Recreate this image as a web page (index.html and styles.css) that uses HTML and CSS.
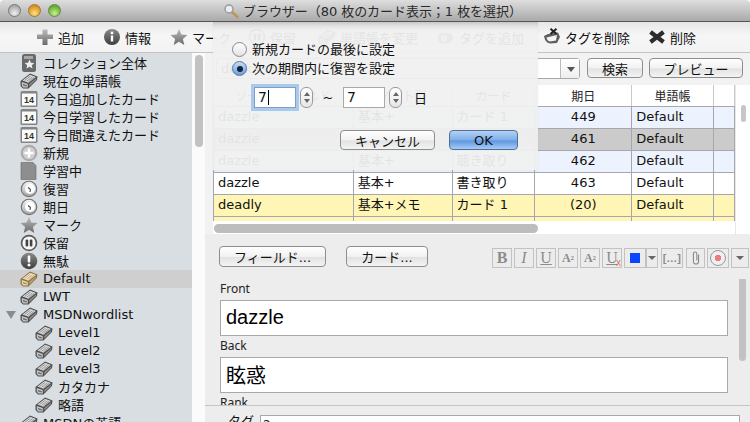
FILE: index.html
```html
<!DOCTYPE html>
<html lang="ja">
<head>
<meta charset="utf-8">
<title>ブラウザー</title>
<link rel="stylesheet" href="styles.css">
</head>
<body>
<svg class="sprite" width="0" height="0">
  <defs>
    <linearGradient id="gDeck" x1="0" y1="0" x2="0" y2="1"><stop offset="0" stop-color="#bbb"/><stop offset="1" stop-color="#6a6a6a"/></linearGradient>
    <linearGradient id="gDisc" x1="0" y1="0" x2="0" y2="1"><stop offset="0" stop-color="#f4f4f4"/><stop offset="1" stop-color="#a5a5a5"/></linearGradient>
    <linearGradient id="gDark" x1="0" y1="0" x2="0" y2="1"><stop offset="0" stop-color="#8a8a8a"/><stop offset="1" stop-color="#3c3c3c"/></linearGradient>
    <symbol id="deck" viewBox="0 0 18 18">
      <path d="M.5 9 L10 1.500 L17.500 4.500 L17 8 L8.500 16.500 L3 16.500 L.5 14Z" fill="#4f4f4f"/>
      <path d="M2.500 8.500 L10 2.800 L15.800 5 L8.500 10.800Z" fill="#dedede"/>
      <path d="M4.500 8.500 L10.500 4 M6.500 9.300 L12.500 4.800 M8.500 9.800 L14 5.400" stroke="#8f8f8f" stroke-width=".9"/>
      <path d="M1.800 10 L7.800 12 V15.500 L3.300 15.500 L1.800 13.800Z" fill="#c4c4c4"/>
      <path d="M3 12 L6.800 13.200 V14.500 L3 13.500Z" fill="#6a6a6a"/>
      <path d="M9.300 12 L16.300 6.300 L16 7.800 L9.300 14.500Z" fill="#909090"/>
    </symbol>
    <symbol id="deckTan" viewBox="0 0 18 18">
      <path d="M.5 9 L10 1.500 L17.500 4.500 L17 8 L8.500 16.500 L3 16.500 L.5 14Z" fill="#8c7448"/>
      <path d="M2.500 8.500 L10 2.800 L15.800 5 L8.500 10.800Z" fill="#f3e6c8"/>
      <path d="M4.500 8.500 L10.500 4 M6.500 9.300 L12.500 4.800 M8.500 9.800 L14 5.400" stroke="#c2a878" stroke-width=".9"/>
      <path d="M1.800 10 L7.800 12 V15.500 L3.300 15.500 L1.800 13.800Z" fill="#e6d4ae"/>
      <path d="M3 12 L6.800 13.200 V14.500 L3 13.500Z" fill="#a68d5e"/>
      <path d="M9.300 12 L16.300 6.300 L16 7.800 L9.300 14.500Z" fill="#bfa672"/>
    </symbol>
    <symbol id="clock" viewBox="0 0 18 18">
      <circle cx="9" cy="9" r="8.300" fill="#6f6f6f"/>
      <circle cx="9" cy="9" r="7.200" fill="url(#gDisc)"/>
      <circle cx="10" cy="9" r="5" fill="#fff"/>
      <path d="M10.500 9.500 L8 7.500 M10.500 9.500 L10 12" stroke="#444" stroke-width="1.100" fill="none"/>
    </symbol>
    <symbol id="star" viewBox="0 0 18 18">
      <path d="M9 1 L11.400 6.500 L17.500 7 L12.900 11 L14.300 17 L9 13.800 L3.700 17 L5.100 11 L.5 7 L6.600 6.500Z" fill="url(#gDeck)"/>
    </symbol>
    <symbol id="pause" viewBox="0 0 18 18">
      <circle cx="9" cy="9" r="8.300" fill="#5a5a5a"/>
      <circle cx="9" cy="9" r="6.600" fill="#f6f6f6"/>
      <rect x="5.600" y="5.500" width="2.600" height="7" rx="1" fill="#444"/>
      <rect x="9.800" y="5.500" width="2.600" height="7" rx="1" fill="#444"/>
    </symbol>
    <symbol id="info" viewBox="0 0 18 18">
      <circle cx="9" cy="9" r="8" fill="url(#gDark)"/>
      <rect x="7.800" y="7.500" width="2.400" height="6" fill="#fff"/>
      <circle cx="9" cy="5" r="1.400" fill="#fff"/>
    </symbol>
    <symbol id="alert" viewBox="0 0 18 18">
      <circle cx="9" cy="9" r="8.300" fill="url(#gDark)"/>
      <rect x="7.700" y="3.500" width="2.600" height="7" rx="1" fill="#fff"/>
      <circle cx="9" cy="13" r="1.500" fill="#fff"/>
    </symbol>
    <symbol id="plus" viewBox="0 0 18 18">
      <circle cx="9" cy="9" r="8.300" fill="#a9a9a9"/>
      <circle cx="9" cy="9" r="6.300" fill="#cfcfcf"/>
      <path d="M9 4.500 V13.500 M4.500 9 H13.500" stroke="#fff" stroke-width="2.400"/>
    </symbol>
    <symbol id="cal" viewBox="0 0 18 18">
      <rect x=".5" y="1" width="17" height="16" rx="1.500" fill="#858585"/>
      <rect x="2" y="3.500" width="14" height="12" fill="#fafafa"/>
      <text x="9" y="13.200" text-anchor="middle" class="cal-num">14</text>
    </symbol>
    <symbol id="page" viewBox="0 0 18 18">
      <path d="M1 .5 H13 L16 3.500 V17.500 H1Z" fill="#8e8e8e" stroke="#666" stroke-width=".6"/>
    </symbol>
    <symbol id="coll" viewBox="0 0 18 18">
      <rect x="2" y="0" width="14" height="18" rx="2.500" fill="#6a6a6a"/>
      <rect x="4" y="2" width="9" height="3" fill="#a8a8a8"/>
      <path d="M9.500 5.500 L10.900 8.700 L14.300 9 L11.800 11.200 L12.500 14.500 L9.500 12.800 L6.500 14.500 L7.200 11.200 L4.700 9 L8.100 8.700Z" fill="#eee"/>
    </symbol>
  </defs>
</svg>

<div class="window">
  <header class="titlebar">
    <div class="lights">
      <span class="light light-gray"></span>
      <span class="light light-orange"></span>
      <span class="light light-green"></span>
    </div>
    <div class="title">
      <svg class="title-icon" viewBox="0 0 16 16" width="16" height="16">
        <circle cx="6" cy="6" r="4" fill="#e8eef2" stroke="#9a9a9a" stroke-width="1.500"/>
        <path d="M9.500 9.500 L14.500 14" stroke="#b79a52" stroke-width="2.600" stroke-linecap="round"/>
      </svg>
      <span>ブラウザー（80 枚のカード表示；1 枚を選択）</span>
    </div>
  </header>

  <div class="content">
    <nav class="toolbar">
      <div class="tool tool-add">
        <svg class="tool-icon" viewBox="0 0 18 18"><path d="M6.500 1.500 H11.500 V6.500 H17 V11 H11.500 V17 H6.500 V11 H1 V6.500 H6.500Z" fill="url(#gDeck)"/></svg>
        <span>追加</span>
      </div>
      <div class="tool tool-info"><svg class="tool-icon"><use href="#info"/></svg><span>情報</span></div>
      <div class="tool tool-mark"><svg class="tool-icon"><use href="#star"/></svg><span>マーク</span></div>
      <div class="tool tool-susp"><svg class="tool-icon"><use href="#pause"/></svg><span>保留</span></div>
      <div class="tool tool-deck"><svg class="tool-icon"><use href="#deck"/></svg><span>単語帳を変更</span></div>
      <div class="tool tool-tagadd">
        <svg class="tool-icon" viewBox="0 0 18 18"><path d="M1 10 Q1 5 5 5 H14 L16.500 10 L13 15.500 H6 Q1 15.500 1 10Z" fill="#777"/><circle cx="7" cy="10.500" r="3.200" fill="#eee"/></svg>
        <span>タグを追加</span>
      </div>
      <div class="tool tool-tagdel">
        <svg class="tool-icon" viewBox="0 0 18 18"><path d="M1 8 L5 6 L15 4.500 L17 9 L14 15 L7 15.500 Q2 15 1 8Z" fill="#5e5e5e"/><path d="M3.500 9.500 L14 7 L13 12.500 L7 13.500 Q4 13 3.500 9.500Z" fill="#f3f3f3"/><path d="M7.500 .8 L13.500 6 M13.500 .8 L7.500 6" stroke="#222" stroke-width="2"/></svg>
        <span>タグを削除</span>
      </div>
      <div class="tool tool-del">
        <svg class="tool-icon" viewBox="0 0 18 18"><path d="M2.500 4 L15.500 14 M15.500 4 L2.500 14" stroke="#2c2c2c" stroke-width="4.200"/></svg>
        <span>削除</span>
      </div>
    </nav>

    <div class="main">
      <aside class="sidebar">
        <ul class="tree">
          <li class="node"><svg class="node-icon"><use href="#coll"/></svg><span>コレクション全体</span></li>
          <li class="node"><svg class="node-icon"><use href="#deck"/></svg><span>現在の単語帳</span></li>
          <li class="node"><svg class="node-icon"><use href="#cal"/></svg><span>今日追加したカード</span></li>
          <li class="node"><svg class="node-icon"><use href="#cal"/></svg><span>今日学習したカード</span></li>
          <li class="node"><svg class="node-icon"><use href="#cal"/></svg><span>今日間違えたカード</span></li>
          <li class="node"><svg class="node-icon"><use href="#plus"/></svg><span>新規</span></li>
          <li class="node"><svg class="node-icon"><use href="#page"/></svg><span>学習中</span></li>
          <li class="node"><svg class="node-icon"><use href="#clock"/></svg><span>復習</span></li>
          <li class="node"><svg class="node-icon"><use href="#clock"/></svg><span>期日</span></li>
          <li class="node"><svg class="node-icon"><use href="#star"/></svg><span>マーク</span></li>
          <li class="node"><svg class="node-icon"><use href="#pause"/></svg><span>保留</span></li>
          <li class="node"><svg class="node-icon"><use href="#alert"/></svg><span>無駄</span></li>
          <li class="node node-selected"><svg class="node-icon"><use href="#deckTan"/></svg><span>Default</span></li>
          <li class="node"><svg class="node-icon"><use href="#deck"/></svg><span>LWT</span></li>
          <li class="node node-open"><span class="twisty"></span><svg class="node-icon"><use href="#deck"/></svg><span>MSDNwordlist</span></li>
          <li class="node node-child"><svg class="node-icon"><use href="#deck"/></svg><span>Level1</span></li>
          <li class="node node-child"><svg class="node-icon"><use href="#deck"/></svg><span>Level2</span></li>
          <li class="node node-child"><svg class="node-icon"><use href="#deck"/></svg><span>Level3</span></li>
          <li class="node node-child"><svg class="node-icon"><use href="#deck"/></svg><span>カタカナ</span></li>
          <li class="node node-child"><svg class="node-icon"><use href="#deck"/></svg><span>略語</span></li>
          <li class="node"><svg class="node-icon"><use href="#deck"/></svg><span>MSDNの英語</span></li>
        </ul>
      </aside>
      <div class="side-scroll"><div class="side-thumb"></div></div>

      <section class="right">
        <div class="search-row">
          <div class="search-box"><span class="search-text">deck:current</span><span class="search-arrow"></span></div>
          <button class="btn btn-search">検索</button>
          <button class="btn btn-preview">プレビュー</button>
        </div>

        <div class="list-area">
          <div class="table-wrap">
            <table class="cards">
              <colgroup>
                <col class="c1"><col class="c2"><col class="c3"><col class="c4"><col class="c5"><col class="c6">
              </colgroup>
              <thead>
                <tr><th>ソートフィールド</th><th>ノート型</th><th>カード</th><th>期日</th><th>単語帳</th><th></th></tr>
              </thead>
              <tbody>
                <tr class="r-blue"><td>dazzle</td><td>基本+</td><td>カード 1</td><td class="num">449</td><td>Default</td><td></td></tr>
                <tr class="r-sel"><td>dazzle</td><td>基本+</td><td>カード 1</td><td class="num">461</td><td>Default</td><td></td></tr>
                <tr class="r-blue"><td>dazzle</td><td>基本+</td><td>聴き取り</td><td class="num">462</td><td>Default</td><td></td></tr>
                <tr><td>dazzle</td><td>基本+</td><td>書き取り</td><td class="num">463</td><td>Default</td><td></td></tr>
                <tr class="r-yellow"><td>deadly</td><td>基本+メモ</td><td>カード 1</td><td class="num">(20)</td><td>Default</td><td></td></tr>
                <tr class="r-yellow"><td></td><td></td><td></td><td></td><td></td><td></td></tr>
              </tbody>
            </table>
            <div class="hscroll"><div class="hthumb"></div></div>
          </div>
          <div class="vscroll"><div class="vthumb"></div></div>
        </div>

        <div class="editor">
          <div class="editor-tools">
            <button class="btn btn-fields">フィールド...</button>
            <button class="btn btn-cards">カード...</button>
            <div class="fmt">
              <span class="fb fb-serif"><b>B</b></span>
              <span class="fb fb-serif"><i>I</i></span>
              <span class="fb fb-serif"><u>U</u></span>
              <span class="fb fb-small">A<sup>2</sup></span>
              <span class="fb fb-small">A<sub>2</sub></span>
              <span class="fb fb-serif fb-clear"><u>U</u><em>x</em></span>
              <span class="fb fb-color"><span class="swatch"></span></span>
              <span class="fb fb-arrow"><span class="caret"></span></span>
              <span class="fb fb-cloze">[...]</span>
              <span class="fb fb-clip">
                <svg viewBox="0 0 14 18" width="12" height="16"><path d="M10 5 V13 Q10 16 7 16 Q4 16 4 13 V4 Q4 2 6 2 Q8 2 8 4 V12" fill="none" stroke="#8a8a8a" stroke-width="1.300"/></svg>
              </span>
              <span class="fb fb-rec"><span class="rec"></span></span>
              <span class="fb fb-arrow2"><span class="caret"></span></span>
            </div>
          </div>
          <div class="fields-scroll">
            <div class="fields">
              <div class="f-label">Front</div>
              <div class="f-box">dazzle</div>
              <div class="f-label">Back</div>
              <div class="f-box f-cjk">眩惑</div>
              <div class="f-label">Rank</div>
            </div>
            <div class="f-scroll"><div class="f-thumb"></div></div>
          </div>
          <div class="tagbar">
            <span class="tag-label">タグ</span>
            <div class="tag-input">2s ss</div>
          </div>
        </div>
      </section>
    </div>

    <div class="sheet">
      <label class="radio-row"><span class="radio"></span><span>新規カードの最後に設定</span></label>
      <label class="radio-row"><span class="radio radio-on"></span><span>次の期間内に復習を設定</span></label>
      <div class="range-row">
        <span class="num-field num-focus">7<span class="cursor"></span></span>
        <span class="stepper"><span class="up"></span><span class="down"></span></span>
        <span class="tilde">~</span>
        <span class="num-field">7</span>
        <span class="stepper"><span class="up"></span><span class="down"></span></span>
        <span class="day">日</span>
      </div>
      <div class="sheet-actions">
        <button class="btn btn-cancel">キャンセル</button>
        <button class="btn btn-ok">OK</button>
      </div>
    </div>
  </div>
</div>
</body>
</html>
```

FILE: styles.css
```css
* { box-sizing: border-box; }
html, body { margin: 0; padding: 0; }
body {
  width: 750px;
  height: 422px;
  overflow: hidden;
  background: #fff;
  color: #111;
  font-family: "DejaVu Sans", "Noto Sans CJK JP", sans-serif;
  font-size: 13px;
}
.sprite { position: absolute; }
.cal-num { font: bold 9px "Liberation Sans", sans-serif; fill: #333; }
ul { list-style: none; margin: 0; padding: 0; }
button { font: inherit; color: inherit; margin: 0; }

.window { display: flex; flex-direction: column; height: 422px; overflow: hidden; }

/* title bar */
.titlebar {
  flex: none;
  height: 22px;
  display: flex;
  align-items: center;
  background: linear-gradient(#dedede, #a9a9a9);
  border-bottom: 1px solid #565656;
  border-radius: 4px 4px 0 0;
}
.lights { display: flex; gap: 7px; padding-left: 8px; }
.light { width: 13px; height: 13px; border-radius: 50%; border: 1px solid #777; }
.light-gray { background: radial-gradient(circle at 50% 75%, #f0f0f0, #a8a8a8 75%); }
.light-orange { background: radial-gradient(circle at 50% 75%, #ffdf85, #d98d1b 75%); border-color: #9a7a3a; }
.light-green { background: radial-gradient(circle at 50% 75%, #c8f08e, #5fa832 75%); border-color: #5f8a45; }
.title {
  display: flex;
  align-items: center;
  gap: 4px;
  margin-left: 162px;
  font-size: 13px;
  letter-spacing: -.05px;
  color: #2a2a2a;
}
.title-icon { flex: none; }

/* toolbar */
.content { position: relative; flex: 1; display: flex; flex-direction: column; min-height: 0; }
.toolbar {
  flex: none;
  height: 31px;
  display: flex;
  align-items: center;
  padding-left: 36px;
  background: linear-gradient(#e6e6e6, #f6f6f6 45%, #f3f3f3);
  border-bottom: 1px solid #c4c4c4;
  white-space: nowrap;
}
.tool { display: flex; align-items: center; gap: 4px; flex: none; }
.tool-icon { width: 18px; height: 18px; flex: none; }
.tool-info { margin-left: 19px; }
.tool-mark { margin-left: 19px; }
.tool-susp { margin-left: 17px; }
.tool-deck { margin-left: 22px; }
.tool-tagadd { margin-left: 19px; }
.tool-tagdel { margin-left: 19px; }
.tool-del { margin-left: 18px; }

/* main */
.main { flex: 1; display: flex; min-height: 0; }
.sidebar { flex: none; width: 192px; background: #d9dee3; overflow: hidden; padding-top: 1px; }
.node {
  height: 18px;
  display: flex;
  align-items: center;
  padding-left: 20px;
  white-space: nowrap;
  position: relative;
}
.node span:last-child { margin-left: 5px; position: relative; top: -1px; }
.node-icon { width: 18px; height: 18px; flex: none; }
.node-selected { background: #cfcfcf; }
.node-child { padding-left: 35px; }
.node-child span:last-child { margin-left: 5px; }
.twisty {
  position: absolute;
  left: 6px;
  top: 5px;
  border-left: 5px solid transparent;
  border-right: 5px solid transparent;
  border-top: 8px solid #8b8b8b;
}
.side-scroll { flex: none; width: 13px; background: #fbfbfb; padding: 2px 2px 0 3px; }
.side-thumb { height: 92px; background: #c2c2c2; border-radius: 4px; }

.right { flex: 1; min-width: 0; display: flex; flex-direction: column; background: #f2f2f2; }

.search-row {
  flex: none;
  height: 32px;
  display: flex;
  align-items: flex-start;
  padding: 5px 7px 0 11px;
}
.search-box {
  width: 364px;
  height: 21px;
  display: flex;
  background: #fff;
  border: 1px solid #a8a8a8;
  border-radius: 3px;
}
.search-text { flex: 1; padding-left: 4px; line-height: 19px; }
.search-arrow {
  width: 19px;
  border-left: 1px solid #bbb;
  position: relative;
  background: linear-gradient(#fff, #eee);
}
.search-arrow::after {
  content: "";
  position: absolute;
  left: 6px;
  top: 8px;
  border-left: 4px solid transparent;
  border-right: 4px solid transparent;
  border-top: 5px solid #555;
}
.btn {
  height: 20px;
  padding: 0;
  display: flex;
  align-items: center;
  justify-content: center;
  border: 1px solid #8e8e8e;
  border-radius: 4px;
  background: linear-gradient(#fff, #f1f1f1 50%, #e2e2e2 55%, #f4f4f4);
  font-size: 13px;
}
.btn-search { width: 56px; margin-left: 7px; }
.btn-preview { width: 94px; margin-left: 6px; }

/* list */
.list-area { flex: none; height: 149px; display: flex; margin-left: 8px; background: #fff; }
.table-wrap { flex: none; width: 522px; display: flex; flex-direction: column; }
.cards {
  flex: none;
  width: 522px;
  height: 136px;
  table-layout: fixed;
  border-collapse: collapse;
  display: block;
  overflow: hidden;
}
.cards thead tr { height: 21px; }
.cards tbody tr { height: 22px; }
.c1 { width: 140px; }
.c2 { width: 99px; }
.c3 { width: 83px; }
.c4 { width: 97px; }
.c5 { width: 82px; }
.c6 { width: 21px; }
.cards th {
  font-weight: normal;
  font-size: 12px;
  color: #222;
  background: #fff;
  text-align: center;
  border-right: 1px solid #c9c9c9;
  border-bottom: 1px solid #a9a9a9;
  padding: 0;
}
.cards td {
  border: 1px solid #a6a6ae;
  border-top: 0;
  padding: 0 0 0 4px;
  overflow: hidden;
  white-space: nowrap;
  line-height: 20px;
}
.cards td.num { text-align: center; padding: 0; }
.r-blue td { background: #edf3fe; }
.r-sel td { background: #cbcbcb; }
.r-yellow td { background: #fff6b5; }
.hscroll { flex: none; height: 13px; padding: 3px 0 0 1px; }
.hthumb { width: 324px; height: 9px; background: #bdbdbd; border-radius: 5px; }
.vscroll { flex: 1; padding: 20px 4px 0 5px; border-left: 1px solid #e8e8e8; }
.vthumb { height: 17px; background: #c6c6c6; border-radius: 4px; }

/* editor */
.editor { flex: 1; min-height: 0; display: flex; flex-direction: column; background: #ededed; }
.editor-tools { flex: none; height: 45px; display: flex; align-items: flex-start; padding: 12px 0 0 14px; }
.btn-fields { width: 107px; height: 21px; }
.btn-cards { width: 82px; height: 21px; margin-left: 20px; }
.fmt { display: flex; align-items: flex-start; gap: 2px; margin-left: 64px; padding-top: 2px; }
.fb {
  width: 20px;
  height: 20px;
  display: flex;
  align-items: center;
  justify-content: center;
  border: 1px solid #c2c2c2;
  color: #8c8c8c;
  background: #ececec;
  flex: none;
  position: relative;
}
.fb-serif { font: 16px "Liberation Serif", serif; }
.fb-small { font: bold 12px "Liberation Serif", serif; }
.fb-small sup, .fb-small sub { font-size: 7px; line-height: 0; }
.fb-clear em { position: absolute; right: 0; bottom: -1px; font: 10px "Liberation Sans", sans-serif; color: #e0736a; }
.fb-color { width: 22px; }
.swatch { width: 10px; height: 10px; background: #0a46ff; }
.fb-arrow { width: 12px; margin-left: -2px; }
.fb-arrow2 { width: 18px; }
.caret {
  border-left: 4px solid transparent;
  border-right: 4px solid transparent;
  border-top: 4px solid #666;
}
.fb-cloze { width: 22px; font: bold 11px "Liberation Sans", sans-serif; letter-spacing: .4px; margin-left: 1px; }
.fb-clip { width: 19px; margin-left: 1px; }
.fb-rec { width: 22px; }
.rec {
  width: 16px;
  height: 16px;
  border-radius: 50%;
  border: 1px solid #999;
  background: radial-gradient(circle, #ec7b85 0 3px, #efefef 3.5px);
}

.fields-scroll { flex: 1; min-height: 0; display: flex; overflow: hidden; border-bottom: 1px solid #c4c4c4; }
.fields { flex: 1; min-width: 0; padding: 0 6px 0 15px; font-family: "Noto Sans", "DejaVu Sans", sans-serif; }
.f-label { height: 20px; line-height: 20px; font-size: 12px; color: #222; }
.f-box {
  height: 36px;
  margin-top: 1px;
  background: #fff;
  border: 1px solid #a9a9a9;
  padding-left: 5px;
  font: 20px/33px "Liberation Sans", "Noto Sans CJK JP", sans-serif;
  color: #000;
}
.f-cjk { font-family: "Noto Sans CJK JP", sans-serif; }
.f-scroll { flex: none; width: 16px; padding: 0 4px 0 5px; }
.f-thumb { height: 82px; background: #c2c2c2; border-radius: 0 0 4px 4px; }
.tagbar { flex: none; height: 16px; display: flex; padding: 9px 10px 0 15px; background: #ededed; margin-left: 8px; overflow: hidden; }
.tag-label { width: 32px; line-height: 14px; flex: none; }
.tag-input { flex: 1; height: 24px; background: #fff; border: 1px solid #a9a9a9; padding-left: 2px; line-height: 18px; font-size: 12px; }

/* sheet */
.sheet {
  position: absolute;
  left: 213px;
  top: 0;
  width: 325px;
  height: 148px;
  padding: 18px 0 0 19px;
  background: rgba(240, 240, 240, .94);
  box-shadow: inset 0 8px 8px -8px rgba(0, 0, 0, .35), 0 1px 2px rgba(0, 0, 0, .05);
}
.radio-row { display: flex; align-items: center; height: 19px; gap: 5px; }
.radio-row span:last-child { position: relative; top: -1px; }
.radio {
  width: 15px;
  height: 15px;
  border-radius: 50%;
  border: 1px solid #8a8a8a;
  background: linear-gradient(#fff, #e2e2e2);
  flex: none;
  display: flex;
  align-items: center;
  justify-content: center;
}
.radio-on { background: linear-gradient(#c7dcf4, #6b9fde); border-color: #54779f; }
.radio-on::after { content: ""; width: 6px; height: 6px; border-radius: 50%; background: #15233a; }
.range-row { display: flex; align-items: center; height: 21px; margin-top: 9px; padding-left: 22px; }
.num-field {
  width: 42px;
  height: 21px;
  background: #fff;
  border: 1px solid #a9a9a9;
  padding-left: 3px;
  line-height: 19px;
  display: flex;
  align-items: center;
  font-size: 14px;
}
.num-focus { box-shadow: 0 0 0 3px #a9c9ef; border-color: #7e9ec4; }
.cursor { width: 1px; height: 15px; background: #000; margin-left: 1px; }
.stepper {
  width: 13px;
  height: 21px;
  margin-left: 4px;
  border: 1px solid #9a9a9a;
  border-radius: 6px;
  background: linear-gradient(#fff, #e6e6e6);
  display: flex;
  flex-direction: column;
  align-items: center;
  justify-content: center;
  gap: 3px;
}
.up { border-left: 3px solid transparent; border-right: 3px solid transparent; border-bottom: 4px solid #666; }
.down { border-left: 3px solid transparent; border-right: 3px solid transparent; border-top: 4px solid #666; }
.tilde { width: 30px; text-align: center; }
.day { margin-left: 12px; }
.sheet-actions { display: flex; margin-top: 22px; padding-left: 108px; gap: 14px; }
.btn-cancel { width: 95px; height: 20px; }
.btn-ok {
  width: 69px;
  height: 20px;
  border-color: #4f6f9a;
  background: linear-gradient(#b4d2f5, #7eaee8 50%, #5f97e0 55%, #a7cdf7);
}
```
